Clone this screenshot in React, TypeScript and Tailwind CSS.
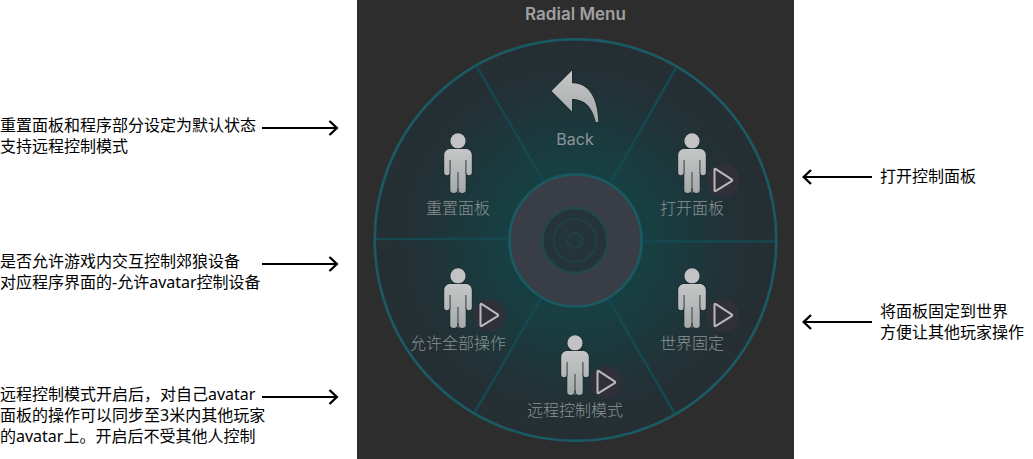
import React from "react";

type Note = { lines: string[]; place: string };

const leftNotes: Note[] = [
  { lines: ["重置面板和程序部分设定为默认状态", "支持远程控制模式"], place: "mt-[115px]" },
  { lines: ["是否允许游戏内交互控制郊狼设备", "对应程序界面的-允许avatar控制设备"], place: "mt-[94px]" },
  {
    lines: ["远程控制模式开启后，对自己avatar", "面板的操作可以同步至3米内其他玩家", "的avatar上。开启后不受其他人控制"],
    place: "mt-[91px]",
  },
];

const rightNotes: Note[] = [
  { lines: ["打开控制面板"], place: "mt-[166px]" },
  { lines: ["将面板固定到世界", "方便让其他玩家操作"], place: "mt-[114px]" },
];

type Item = { label: string; place: string; playable: boolean };

const items: Item[] = [
  { label: "打开面板", place: "left-[271px] top-[94px]", playable: true },
  { label: "世界固定", place: "left-[271px] top-[229px]", playable: true },
  { label: "远程控制模式", place: "left-[154px] top-[296px]", playable: true },
  { label: "允许全部操作", place: "left-[37px] top-[229px]", playable: true },
  { label: "重置面板", place: "left-[37px] top-[94px]", playable: false },
];

function RightArrow() {
  return (
    <svg className="mt-1 h-5 w-[77px] shrink-0" viewBox="0 0 77 20" fill="none" stroke="#000" strokeWidth="2" aria-hidden="true">
      <path d="M0 9H75" />
      <path d="M67.500 2l7.300 7l-7.300 7" strokeWidth="2.400" />
    </svg>
  );
}

function LeftArrow() {
  return (
    <svg className="h-5 w-[70px] shrink-0" viewBox="0 0 70 20" fill="none" stroke="#000" strokeWidth="2" aria-hidden="true">
      <path d="M70 10H2" />
      <path d="M9 3l-7.300 7l7.300 7" strokeWidth="2.400" />
    </svg>
  );
}

function Person() {
  return (
    <svg className="h-16 w-8" viewBox="0 0 32 64" aria-hidden="true">
      <defs>
        <linearGradient id="person-fill" x1="0" y1="0" x2="0" y2="1">
          <stop offset="0" stopColor="#c5c6c7" />
          <stop offset="1" stopColor="#a5aaa9" />
        </linearGradient>
      </defs>
      <g stroke="#182527" strokeOpacity="0.55" strokeWidth="1.500" paintOrder="stroke">
        <circle cx="16" cy="8.900" r="7.600" fill="#c3c2c4" />
        <path
          fill="url(#person-fill)"
          d="M8.500 17h15c3.800 0 6.300 2.500 6.300 6.300v17.200c0 1.700-1 2.700-2.700 2.700S24.200 42.200 24.200 40.500h-.5V58.300c0 1.700-1.200 2.800-3.400 2.800S16.900 60 16.900 58.300V56h-1.800v2.300c0 1.700-1.200 2.800-3.400 2.800S8.300 60 8.300 58.300V40.500h-.5c0 1.700-1.200 2.700-2.900 2.700s-2.700-1-2.700-2.700V23.300C2.200 19.500 4.700 17 8.500 17z"
        />
      </g>
      <path d="M8.100 28v14M23.900 28v14M16 40v21" stroke="#59605f" strokeWidth="1.400" fill="none" />
    </svg>
  );
}

function PlayBadge() {
  return (
    <svg className="absolute left-[62px] top-8 size-[34px]" viewBox="0 0 34 34" aria-hidden="true">
      <circle cx="17" cy="16.500" r="16.500" fill="#30303a" />
      <path
        d="M8.500 5.700v20.600q0 1.400 1.400.6L25.600 17.100q1.200-.9 0-1.700L9.900 5.200q-1.400-.9-1.400.5z"
        fill="none"
        stroke="#b9b9bb"
        strokeWidth="2"
      />
    </svg>
  );
}

function BackArrow() {
  return (
    <svg className="h-14 w-[52px]" viewBox="0 0 52 56" aria-hidden="true">
      <defs>
        <linearGradient id="back-fill" x1="0" y1="0" x2="0" y2="1">
          <stop offset="0" stopColor="#c6c6c7" />
          <stop offset="1" stopColor="#a5a9a9" />
        </linearGradient>
      </defs>
      <path
        d="M2.500 22L23 1.500V14.300C38 13.500 48.800 27 49.300 53H46.800C43 36 34 30 23 30V42.500z"
        fill="url(#back-fill)"
        stroke="#182527"
        strokeOpacity="0.6"
        strokeWidth="1.600"
        paintOrder="stroke"
      />
    </svg>
  );
}

function Dial() {
  return (
    <svg className="size-full" viewBox="0 0 405 405" aria-hidden="true">
      <defs>
        <radialGradient id="dial-fill">
          <stop offset="0.330" stopColor="#174043" />
          <stop offset="0.500" stopColor="#1a3b3f" />
          <stop offset="0.700" stopColor="#203439" />
          <stop offset="0.870" stopColor="#242f34" />
          <stop offset="1" stopColor="#252e33" />
        </radialGradient>
      </defs>
      <circle cx="202.500" cy="202" r="200.500" fill="url(#dial-fill)" />
      <path
        d="M104 29l67 115M303 30l-65 114M102 374l66-114M302 376l-66-114M3 201h133M270 203.500h132"
        stroke="#15484f"
        strokeWidth="2.600"
      />
      <g stroke="#1b5a63" strokeWidth="2.700">
        <circle cx="202.500" cy="202" r="200.800" fill="none" />
        <circle cx="202.500" cy="202.500" r="66" fill="#393e46" />
      </g>
      <g fill="#24343a" stroke="#23474e">
        <circle cx="202" cy="202.500" r="32.500" strokeWidth="2.500" />
        <circle cx="202" cy="202.500" r="21.500" stroke="#213f45" strokeWidth="2.400" />
        <circle cx="202" cy="202.500" r="7.500" stroke="#213f45" strokeWidth="2.400" />
      </g>
    </svg>
  );
}

function NoteText({ lines }: { lines: string[] }) {
  return (
    <p className="whitespace-nowrap text-base leading-[21px] text-black">
      {lines.map((line) => (
        <span key={line} className="block">
          {line}
        </span>
      ))}
    </p>
  );
}

export default function App() {
  return (
    <main className="grid min-h-screen grid-cols-[357fr_437px_239fr] bg-white font-['Noto_Sans','Noto_Sans_CJK_SC',sans-serif]">
      <section aria-label="左侧说明">
        {leftNotes.map((note) => (
          <div key={note.lines[0]} className={`flex ${note.place}`}>
            <div className="w-[262px] shrink-0">
              <NoteText lines={note.lines} />
            </div>
            <RightArrow />
          </div>
        ))}
      </section>

      <section className="bg-[#2d2d2d] font-['Inter','Noto_Sans_CJK_SC',sans-serif]">
        <h1 className="pt-0.5 text-center text-[17px] font-semibold leading-6 text-[#a0a0a0]">Radial Menu</h1>
        <nav aria-label="Radial Menu" className="relative mx-auto mt-3 size-[405px]">
          <Dial />
          <button type="button" className="absolute left-[154px] top-[31px] flex w-24 flex-col items-center text-base leading-6 text-[#8c9697]">
            <BackArrow />
            <span className="mt-0.5">Back</span>
          </button>
          {items.map((item) => (
            <button
              key={item.label}
              type="button"
              className={`absolute flex w-24 flex-col items-center whitespace-nowrap text-base font-light leading-6 text-[#899293] ${item.place}`}
            >
              <Person />
              {item.playable && <PlayBadge />}
              <span>{item.label}</span>
            </button>
          ))}
        </nav>
      </section>

      <section aria-label="右侧说明">
        {rightNotes.map((note) => (
          <div key={note.lines[0]} className={`flex items-center gap-2 pl-2 ${note.place}`}>
            <LeftArrow />
            <NoteText lines={note.lines} />
          </div>
        ))}
      </section>
    </main>
  );
}
